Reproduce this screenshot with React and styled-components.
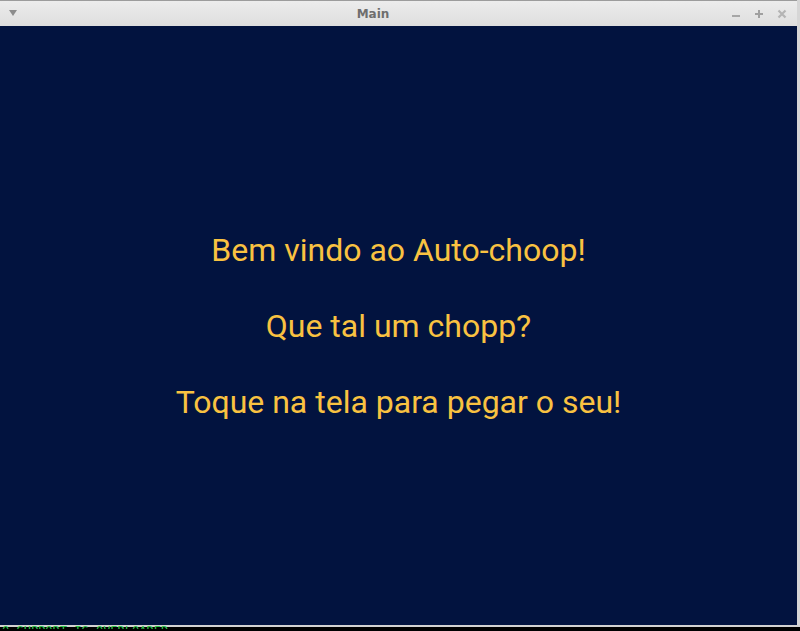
import React from "react";
import styled, { createGlobalStyle } from "styled-components";

const GlobalStyle = createGlobalStyle`
  html, body {
    margin: 0;
    padding: 0;
    background: #000;
    overflow: hidden;
  }
`;

const LINES = [
  "Bem vindo ao Auto-choop!",
  "Que tal um chopp?",
  "Toque na tela para pegar o seu!",
];

const App = () => {
  return (
    <Screen>
      <GlobalStyle />
      <Window>
        <TitleBar>
          <MenuBtn aria-label="menu">
            <svg width="10" height="8" viewBox="0 0 10 8">
              <path d="M1 1 L9 1 L5 7 Z" fill="#8c8c8c" />
            </svg>
          </MenuBtn>
          <Title>Main</Title>
          <Controls>
            <CtrlBtn aria-label="minimizar">
              <svg width="10" height="10" viewBox="0 0 10 10">
                <rect x="1" y="6" width="8" height="2" fill="#a6a6a6" />
              </svg>
            </CtrlBtn>
            <CtrlBtn aria-label="maximizar">
              <svg width="10" height="10" viewBox="0 0 10 10">
                <rect x="1" y="4" width="8" height="2" fill="#a0a0a0" />
                <rect x="4" y="1" width="2" height="8" fill="#a0a0a0" />
              </svg>
            </CtrlBtn>
            <CtrlBtn aria-label="fechar">
              <svg width="10" height="10" viewBox="0 0 10 10">
                <path d="M1.5 1.5 L8.5 8.5 M8.5 1.5 L1.5 8.5" stroke="#b4b4b4" strokeWidth="2.2" />
              </svg>
            </CtrlBtn>
          </Controls>
        </TitleBar>
        <Content>
          {LINES.map((l) => (
            <Message key={l}>{l}</Message>
          ))}
        </Content>
      </Window>
      <Terminal>O SUPPORT IS OVERLOADED</Terminal>
    </Screen>
  );
};
export default App;

const Screen = styled.div`
  width: 800px;
  height: 631px;
  display: flex;
  flex-direction: column;
  background: #000;
  overflow: hidden;
`;

const Window = styled.div`
  height: 625px;
  display: flex;
  flex-direction: column;
  border-right: 3px solid #d6d6d6;
  border-bottom: 2px solid #d2d2d2;
`;

const TitleBar = styled.div`
  height: 25px;
  flex-shrink: 0;
  display: flex;
  align-items: center;
  border-top: 1px solid #9c9c9c;
  background: linear-gradient(180deg, #ececec 0%, #dedede 100%);
  font-family: "DejaVu Sans", "Liberation Sans", sans-serif;
`;

const MenuBtn = styled.div`
  width: 26px;
  display: flex;
  justify-content: center;
  align-items: center;
  margin-top: -2px;
`;

const Title = styled.div`
  flex: 1;
  text-align: center;
  font-size: 12px;
  font-weight: bold;
  color: #6e6e6e;
`;

const Controls = styled.div`
  width: 66px;
  display: flex;
  gap: 13px;
  align-items: center;
  padding-left: 11px;
`;

const CtrlBtn = styled.div`
  width: 10px;
  height: 10px;
  display: flex;
`;

const Content = styled.div`
  flex: 1;
  background: #02133f;
  display: flex;
  flex-direction: column;
  align-items: center;
  justify-content: center;
  gap: 38px;
  padding-top: 1px;
`;

const Message = styled.p`
  margin: 0;
  font-family: Roboto, "Liberation Sans", sans-serif;
  font-size: 32px;
  line-height: 38px;
  color: #f9c241;
`;

const Terminal = styled.div`
  height: 4px;
  overflow: hidden;
  font-family: "DejaVu Sans Mono", monospace;
  font-size: 12px;
  line-height: 12px;
  color: #2ec24a;
  padding-left: 2px;
  margin-top: -2px;
`;
